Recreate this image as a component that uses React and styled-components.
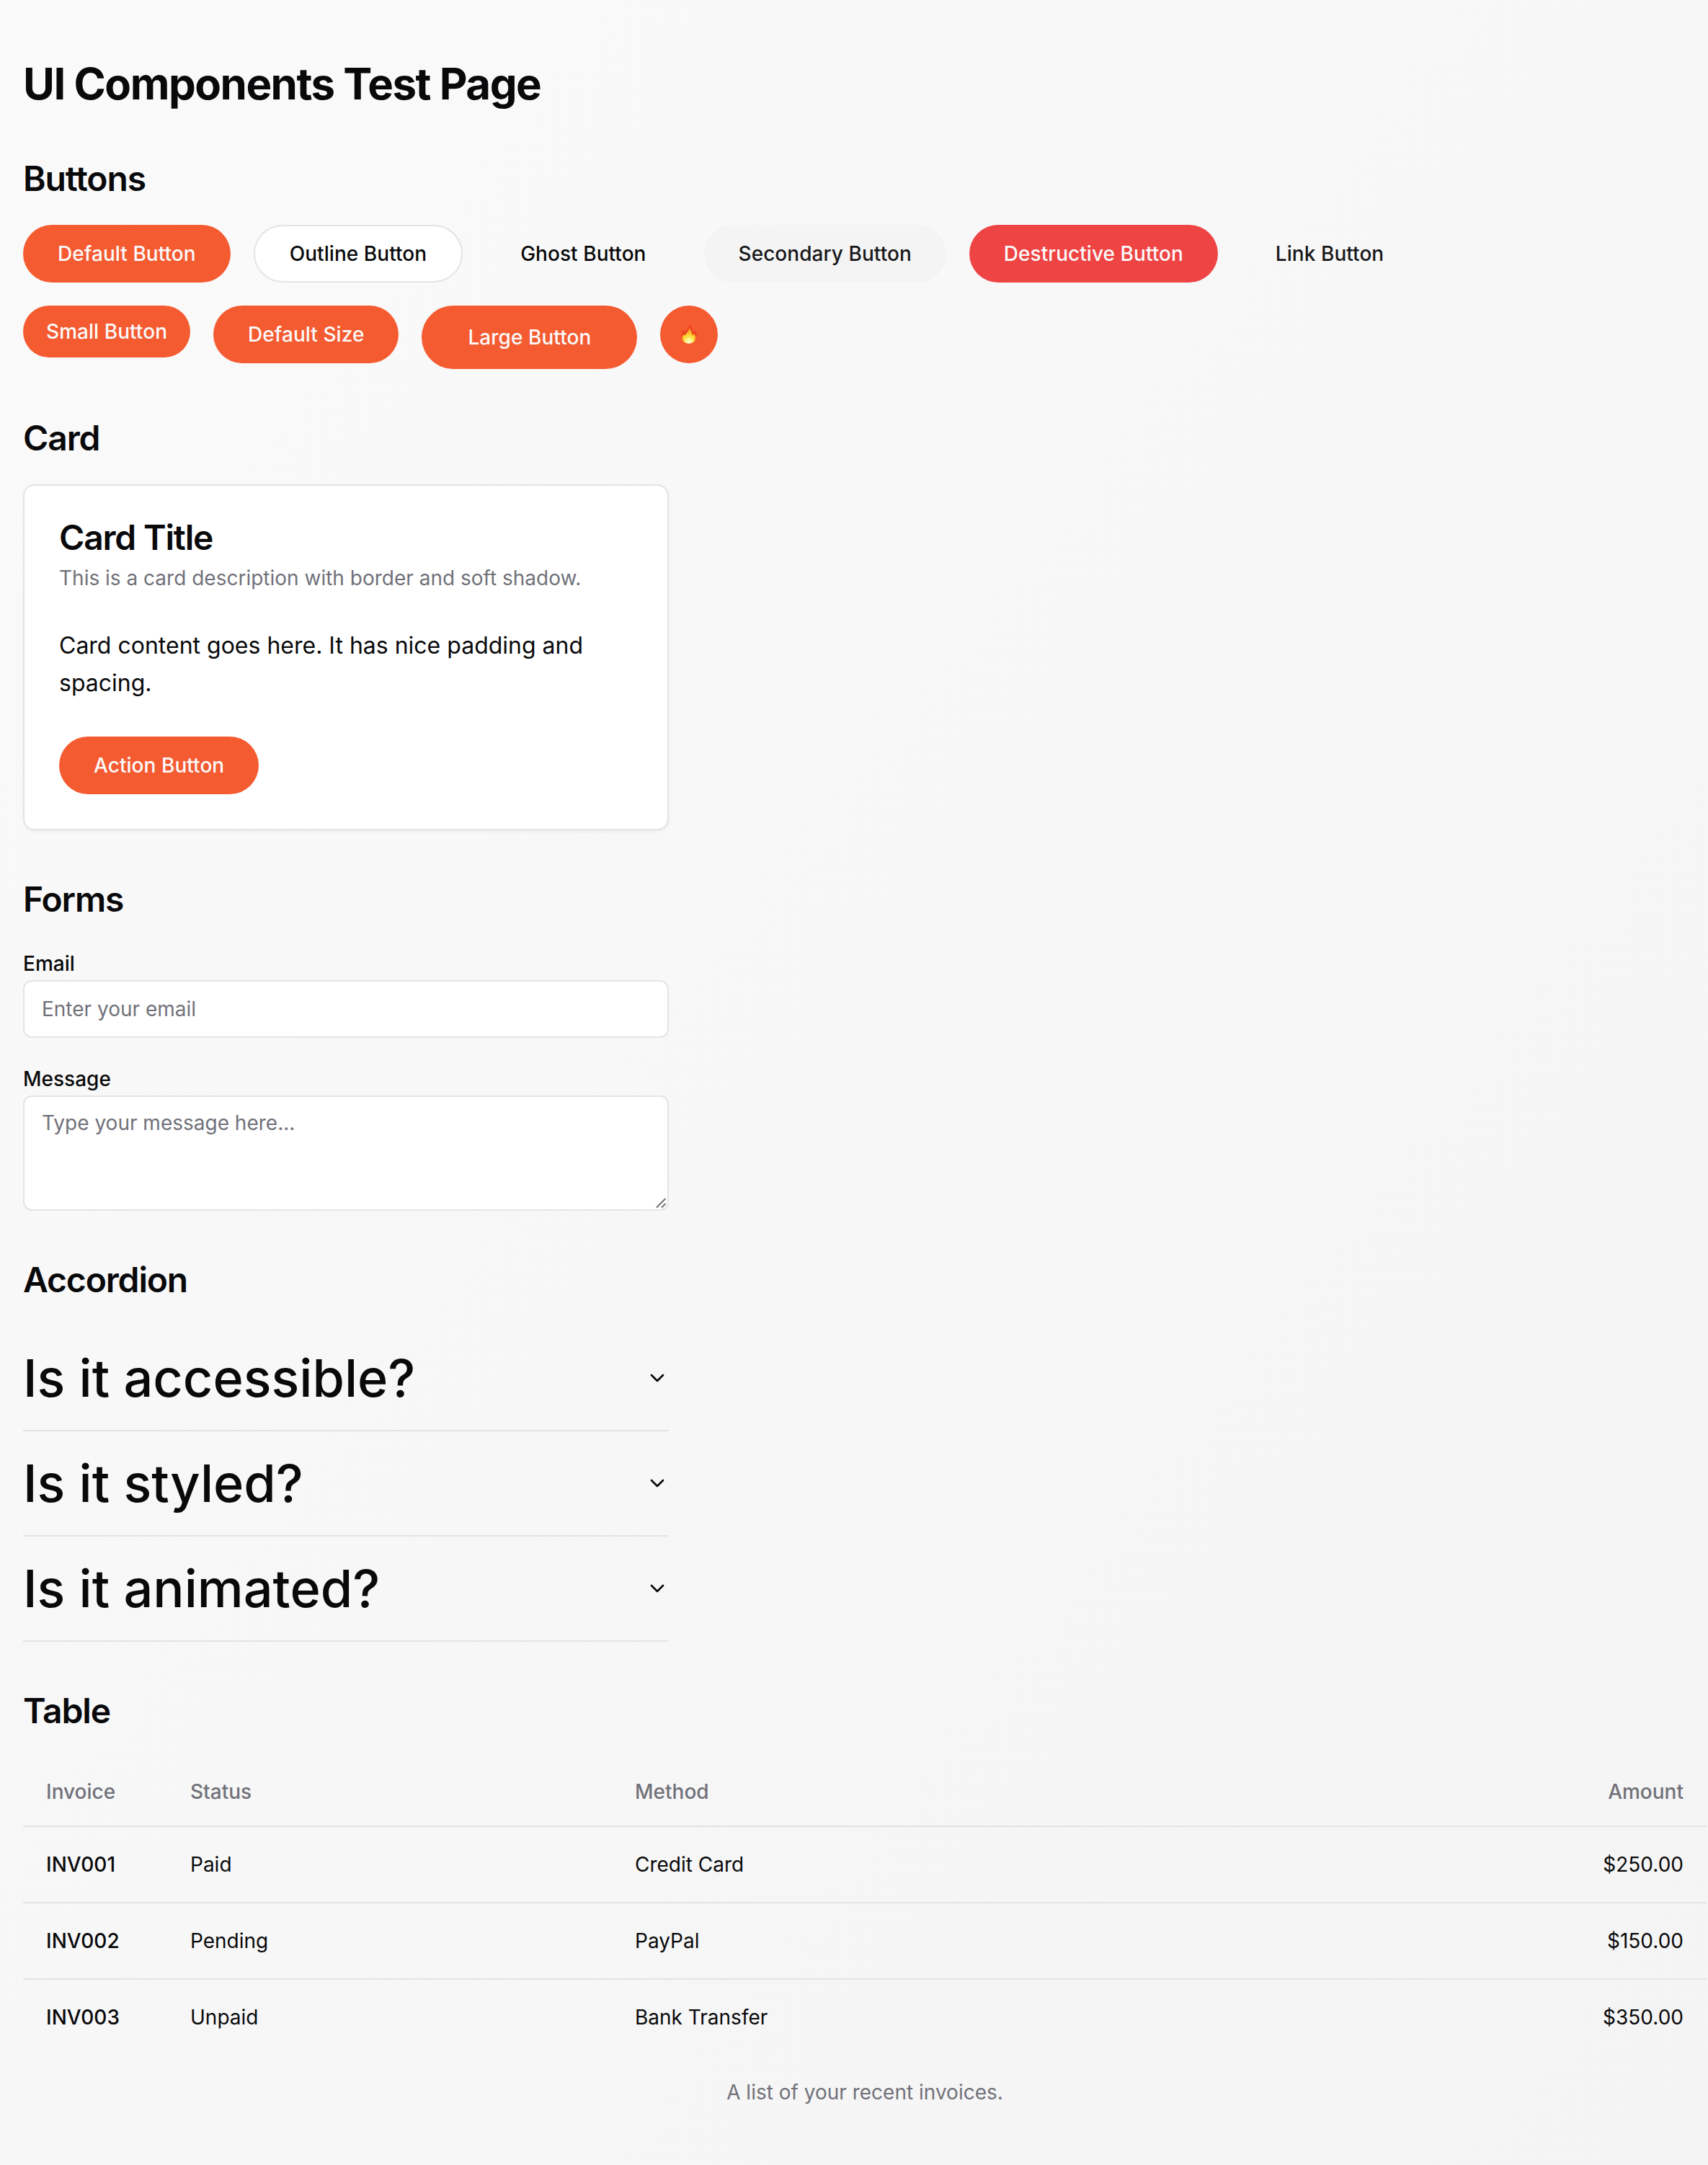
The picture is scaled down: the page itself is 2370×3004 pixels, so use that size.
import React from "react";
import styled, { createGlobalStyle, css } from "styled-components";

const GlobalStyle = createGlobalStyle`
  *, *::before, *::after { box-sizing: border-box; }
  html, body { margin: 0; padding: 0; }
  body {
    font-family: Inter, "Liberation Sans", sans-serif;
    font-size: 32px;
    line-height: 48px;
    color: #09090b;
    background: #fafafa;
    -webkit-font-smoothing: antialiased;
  }
  button, input, textarea { font-family: inherit; }
`;

const Page = styled.main`
  min-height: 3004px;
  background: linear-gradient(to bottom right, #fafafa, #f4f4f4);
`;

const Container = styled.div`
  display: flex;
  flex-direction: column;
  gap: 64px;
  width: 2368px;
  padding: 80px 0 80px 32px;
`;

const PageTitle = styled.h1`
  margin: 0;
  font-size: 60px;
  line-height: 72px;
  font-weight: 700;
  letter-spacing: -0.025em;
`;

const Section = styled.section`
  display: flex;
  flex-direction: column;
  gap: 32px;
`;

const SectionTitle = styled.h2`
  margin: 0;
  font-size: 48px;
  line-height: 64px;
  font-weight: 600;
  letter-spacing: -0.024em;
`;

const ButtonRow = styled.div`
  display: flex;
  align-items: flex-start;
  gap: 32px;
`;

const variants = {
  default: css`
    background: #f55b31;
    color: #fafafa;
  `,
  outline: css`
    background: #fff;
    border: 2px solid #e4e4e4;
    color: #09090b;
  `,
  ghost: css`
    background: transparent;
    color: #09090b;
  `,
  secondary: css`
    background: #f4f4f4;
    color: #18181b;
  `,
  destructive: css`
    background: #ef4444;
    color: #fafafa;
  `,
  link: css`
    background: transparent;
    color: #18181b;
  `,
};

const sizes = {
  sm: css`
    height: 72px;
    padding: 0 32px;
  `,
  md: css`
    height: 80px;
    padding: 0 48px;
  `,
  lg: css`
    height: 88px;
    padding: 0 64px;
  `,
  icon: css`
    height: 80px;
    width: 80px;
    padding: 0;
  `,
};

const Button = styled.button`
  display: inline-flex;
  align-items: center;
  justify-content: center;
  border: 0;
  border-radius: 9999px;
  font-size: 28px;
  line-height: 40px;
  font-weight: 500;
  letter-spacing: 0.05px;
  white-space: nowrap;
  ${(p) => sizes[p.$size || "md"]}
  ${(p) => variants[p.$variant || "default"]}
`;

const Card = styled.article`
  display: flex;
  flex-direction: column;
  align-items: flex-start;
  gap: 48px;
  width: 896px;
  padding: 48px;
  border: 2px solid #e4e4e4;
  border-radius: 16px;
  background: #fff;
  box-shadow: 0 2px 4px rgba(0, 0, 0, 0.05);
`;

const CardHeader = styled.header`
  display: flex;
  flex-direction: column;
  gap: 12px;
`;

const CardTitle = styled.h3`
  margin: 0;
  font-size: 48px;
  line-height: 48px;
  font-weight: 600;
  letter-spacing: -0.025em;
`;

const CardDescription = styled.p`
  margin: 0;
  font-size: 28px;
  line-height: 40px;
  color: #71717a;
`;

const CardBody = styled.p`
  margin: 0;
  line-height: 52px;
`;

const Form = styled.form`
  display: flex;
  flex-direction: column;
  gap: 32px;
  width: 896px;
`;

const Field = styled.div`
  display: flex;
  flex-direction: column;
`;

const Label = styled.label`
  font-size: 28px;
  line-height: 48px;
  font-weight: 500;
  padding-top: 1px;
  height: 48px;
`;

const fieldStyles = css`
  display: block;
  width: 100%;
  border: 2px solid #e4e4e4;
  border-radius: 12px;
  background: #fff;
  font-size: 28px;
  line-height: 40px;
  color: #09090b;
  outline: none;
  &::placeholder {
    color: #71717a;
    opacity: 1;
  }
`;

const Input = styled.input`
  ${fieldStyles}
  height: 80px;
  padding: 16px 24px;
`;

const TextareaWrap = styled.div`
  position: relative;
  height: 160px;
`;

const Textarea = styled.textarea`
  ${fieldStyles}
  height: 160px;
  padding: 16px 24px;
  resize: none;
`;

const Grip = styled.svg`
  position: absolute;
  right: 2px;
  bottom: 2px;
  width: 18px;
  height: 18px;
`;

const Accordion = styled.div`
  width: 896px;
`;

const AccordionTrigger = styled.button`
  display: flex;
  align-items: center;
  justify-content: space-between;
  width: 100%;
  padding: 32px 0;
  border: 0;
  border-bottom: 2px solid #e4e4e4;
  background: transparent;
  color: inherit;
  font-size: 72px;
  line-height: 80px;
  font-weight: 500;
  text-align: left;
`;

const ChevronIcon = styled.svg`
  width: 32px;
  height: 32px;
  fill: none;
  stroke: currentColor;
  stroke-width: 2;
  stroke-linecap: round;
  stroke-linejoin: round;
`;

const Table = styled.table`
  width: 100%;
  table-layout: fixed;
  border-collapse: separate;
  border-spacing: 0;
  caption-side: bottom;
  font-size: 28px;
  line-height: 40px;
`;

const Caption = styled.caption`
  padding-top: 32px;
  color: #71717a;
`;

const Col = styled.col`
  width: ${(p) => p.$width};
`;

const HeadCell = styled.th`
  height: 97px;
  padding: 0 32px;
  border-bottom: 2px solid #e4e4e4;
  color: #71717a;
  font-weight: 500;
  text-align: ${(p) => (p.$right ? "right" : "left")};
`;

const Cell = styled.td`
  padding: 32px;
  border-bottom: 2px solid #e4e4e4;
  font-weight: ${(p) => (p.$strong ? 500 : 400)};
  text-align: ${(p) => (p.$right ? "right" : "left")};
  tr:last-child > & {
    border-bottom: 0;
  }
`;

const FlameSvg = styled.svg`
  width: 22px;
  height: 28px;
  margin-top: -2px;
`;

function Flame() {
  return (
    <FlameSvg viewBox="0 0 22 28" role="img" aria-label="fire">
      <defs>
        <linearGradient id="flameOuter" x1="0" y1="0" x2="0" y2="1">
          <stop offset="0" stopColor="#ee4322" />
          <stop offset="0.6" stopColor="#ee3f1c" />
          <stop offset="1" stopColor="#f9861f" />
        </linearGradient>
        <radialGradient id="flameInner" cx="0.5" cy="0.95" r="0.95">
          <stop offset="0" stopColor="#fffff4" />
          <stop offset="0.22" stopColor="#fff78c" />
          <stop offset="0.5" stopColor="#fdd431" />
          <stop offset="0.78" stopColor="#fba02c" />
          <stop offset="1" stopColor="#f7702a" />
        </radialGradient>
      </defs>
      <path
        fill="url(#flameOuter)"
        d="M11.400 0c.4 2.800 3.600 5 4.700 8.200.5 1.500.7 2.800.9 4 1.300-.8 1.700-2 1.800-3.400 1.900 2.600 3 5.600 3 9.200 0 5.800-4.200 9.800-10.800 9.800S.2 23.800.2 18c0-3.600 1.900-6.400 2.200-10.400 1.400 1.200 2 2.800 2 4.600C7.800 9 11.400 6 11.400 0z"
      />
      <path
        fill="url(#flameInner)"
        d="M11.600 4.800c.8 2.800 3 5 3.300 8.200.2 1.300.5 2.300 1.300 2.800 1.100-.3 1.900-1 2.300-2 1.200 2 1.700 3.900 1.500 6-.5 4.600-3.900 7.800-9 7.800s-8.800-3.100-9.200-7.400c-.2-2.100.4-3.900 1.200-5.600.5 1.200 1.200 1.800 2.200 1.600 2.600-3.200 6.200-6.200 6.400-11.400z"
      />
    </FlameSvg>
  );
}

function Chevron() {
  return (
    <ChevronIcon viewBox="0 0 24 24" aria-hidden="true">
      <path d="m6 9 6 6 6-6" />
    </ChevronIcon>
  );
}

const questions = ["Is it accessible?", "Is it styled?", "Is it animated?"];

const invoices = [
  { id: "INV001", status: "Paid", method: "Credit Card", amount: "$250.00" },
  { id: "INV002", status: "Pending", method: "PayPal", amount: "$150.00" },
  { id: "INV003", status: "Unpaid", method: "Bank Transfer", amount: "$350.00" },
];

export default function App() {
  return (
    <>
      <GlobalStyle />
      <Page>
        <Container>
          <PageTitle>UI Components Test Page</PageTitle>

          <Section>
            <SectionTitle>Buttons</SectionTitle>
            <ButtonRow>
              <Button>Default Button</Button>
              <Button $variant="outline">Outline Button</Button>
              <Button $variant="ghost">Ghost Button</Button>
              <Button $variant="secondary">Secondary Button</Button>
              <Button $variant="destructive">Destructive Button</Button>
              <Button $variant="link">Link Button</Button>
            </ButtonRow>
            <ButtonRow>
              <Button $size="sm">Small Button</Button>
              <Button>Default Size</Button>
              <Button $size="lg">Large Button</Button>
              <Button $size="icon">
                <Flame />
              </Button>
            </ButtonRow>
          </Section>

          <Section>
            <SectionTitle>Card</SectionTitle>
            <Card>
              <CardHeader>
                <CardTitle>Card Title</CardTitle>
                <CardDescription>
                  This is a card description with border and soft shadow.
                </CardDescription>
              </CardHeader>
              <CardBody>
                Card content goes here. It has nice padding and spacing.
              </CardBody>
              <Button>Action Button</Button>
            </Card>
          </Section>

          <Section>
            <SectionTitle>Forms</SectionTitle>
            <Form>
              <Field>
                <Label htmlFor="email">Email</Label>
                <Input id="email" type="email" placeholder="Enter your email" />
              </Field>
              <Field>
                <Label htmlFor="message">Message</Label>
                <TextareaWrap>
                  <Textarea id="message" placeholder="Type your message here..." />
                  <Grip viewBox="0 0 18 18" aria-hidden="true">
                    <path
                      d="M3 15.500 15.500 3M10 15.500l5.500-5.500"
                      fill="none"
                      stroke="#6b6b6b"
                      strokeWidth="1.800"
                    />
                  </Grip>
                </TextareaWrap>
              </Field>
            </Form>
          </Section>

          <Section>
            <SectionTitle>Accordion</SectionTitle>
            <Accordion>
              {questions.map((q) => (
                <AccordionTrigger key={q} type="button">
                  {q}
                  <Chevron />
                </AccordionTrigger>
              ))}
            </Accordion>
          </Section>

          <Section>
            <SectionTitle>Table</SectionTitle>
            <Table>
              <Caption>A list of your recent invoices.</Caption>
              <colgroup>
                <Col $width="200px" />
                <Col $width="617px" />
                <Col $width="auto" />
                <Col $width="500px" />
              </colgroup>
              <thead>
                <tr>
                  <HeadCell>Invoice</HeadCell>
                  <HeadCell>Status</HeadCell>
                  <HeadCell>Method</HeadCell>
                  <HeadCell $right>Amount</HeadCell>
                </tr>
              </thead>
              <tbody>
                {invoices.map((row) => (
                  <tr key={row.id}>
                    <Cell $strong>{row.id}</Cell>
                    <Cell>{row.status}</Cell>
                    <Cell>{row.method}</Cell>
                    <Cell $right>{row.amount}</Cell>
                  </tr>
                ))}
              </tbody>
            </Table>
          </Section>
        </Container>
      </Page>
    </>
  );
}
